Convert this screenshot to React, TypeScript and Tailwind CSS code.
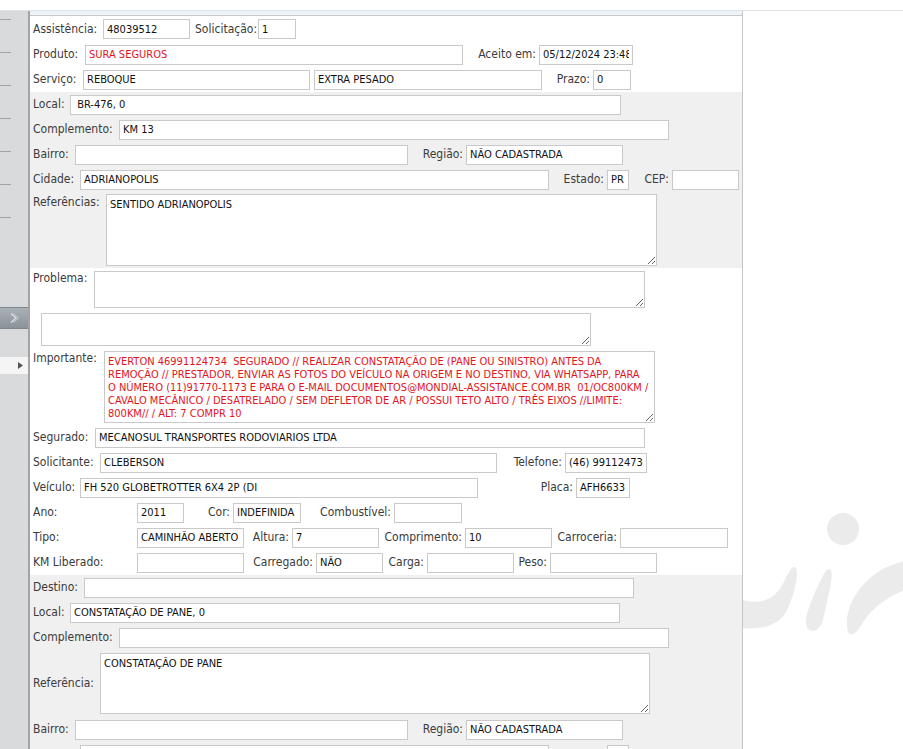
import React from 'react';
import clsx from 'clsx';

type BoxProps = { w: string; value?: string; red?: boolean };

function Box({ w, value = '', red }: BoxProps) {
  return (
    <input
      readOnly
      value={value}
      className={clsx(
        'h-[20px] shrink-0 border border-[#c9c9c9] bg-white px-[3px] text-[11px] outline-none',
        red ? 'text-[#e3141b]' : 'text-[#111]',
        w
      )}
    />
  );
}

type AreaProps = { w: string; h: string; value?: string; red?: boolean };

function Area({ w, h, value = '', red }: AreaProps) {
  return (
    <textarea
      readOnly
      wrap="off"
      value={value}
      className={clsx(
        'shrink-0 overflow-hidden border border-[#c9c9c9] bg-white px-[3px] py-[3px] text-[11px] leading-[13px] outline-none',
        red ? 'text-[#e3141b]' : 'text-[#111]',
        w,
        h
      )}
    />
  );
}

type LblProps = { w: string; right?: boolean; className?: string; children?: React.ReactNode };

function Lbl({ w, right, className, children }: LblProps) {
  return (
    <span
      className={clsx(
        'shrink-0 whitespace-nowrap text-[12px] leading-[15px] text-[#3b3b3b]',
        right && 'pr-[3px] text-right',
        w,
        className
      )}
    >
      {children}
    </span>
  );
}

function Row({ children, className }: { children: React.ReactNode; className?: string }) {
  return <div className={clsx('flex shrink-0 pl-[3px]', className ?? 'h-[25px] items-center')}>{children}</div>;
}

const importante = [
  'EVERTON 46991124734  SEGURADO // REALIZAR CONSTATAÇÃO DE (PANE OU SINISTRO) ANTES DA',
  'REMOÇÃO // PRESTADOR, ENVIAR AS FOTOS DO VEÍCULO NA ORIGEM E NO DESTINO, VIA WHATSAPP, PARA',
  'O NÚMERO (11)91770-1173 E PARA O E-MAIL DOCUMENTOS@MONDIAL-ASSISTANCE.COM.BR  01/OC800KM /',
  'CAVALO MECÂNICO / DESATRELADO / SEM DEFLETOR DE AR / POSSUI TETO ALTO / TRÊS EIXOS //LIMITE:',
  '800KM// / ALT: 7 COMPR 10',
].join('\n');

function Sidebar() {
  const ticks = [0, 1, 2, 3, 4, 5, 6];
  return (
    <div className="flex w-[28px] shrink-0 flex-col overflow-hidden bg-[#d9dadb]">
      <div className="h-[8px] shrink-0" />
      {ticks.map((t) => (
        <div key={t} className="h-[33px] shrink-0">
          <div className="h-px w-[11px] bg-[#a2a2a2]" />
        </div>
      ))}
      <div className="h-[57px] shrink-0" />
      <div className="flex h-[22px] shrink-0 items-center justify-center border-y border-[#7f878e] bg-gradient-to-b from-[#a9b1b7] to-[#8b939a]">
        <svg width="12" height="12" viewBox="0 0 12 12" fill="none">
          <path d="M3 1.5 L8 6 L3 10.5" stroke="#dfe4e8" strokeWidth="1.2" />
          <path d="M5.5 1.5 L10.5 6 L5.5 10.5" stroke="#c9d0d6" strokeWidth="1" />
        </svg>
      </div>
      <div className="h-[28px] shrink-0" />
      <div className="flex h-[17px] shrink-0 items-center justify-end bg-[#f5f5f5] pr-[5px]">
        <svg width="5" height="7" viewBox="0 0 5 7">
          <path d="M0 0 L5 3.5 L0 7 Z" fill="#555" />
        </svg>
      </div>
    </div>
  );
}

function Watermark() {
  return (
    <svg className="absolute inset-0" width="160" height="738" viewBox="743 11 160 738">
      <g fill="#ebebeb">
        <circle cx="843" cy="529" r="16" />
        <path d="M829 569 C833 569 832 578 830 588 L823 620 C820 633 806 635 806 622 C806 610 818 585 824 574 C826 570 827 569 829 569 Z" />
        <path d="M743 600 C760 605 775 600 784 582 C788 572 793 564 796 568 C799 573 795 595 786 612 C778 626 760 630 743 628 Z" />
        <path d="M848 632 C842 610 860 580 885 568 C893 564 900 562 905 561 L905 590 C890 596 873 606 862 624 C857 633 850 638 848 632 Z" />
      </g>
    </svg>
  );
}

export default function App() {
  return (
    <div className="relative h-[749px] w-[903px] overflow-hidden bg-white font-['DejaVu_Sans_Condensed','Liberation_Sans',sans-serif]">
      <div className="h-[10px]" />
      <div className="h-px bg-[#dfe4e8]" />
      <div className="flex h-[738px]">
        <Sidebar />
        <div className="w-[2px] shrink-0 bg-[#a4a4a4]" />
        <div className="flex w-[713px] shrink-0 flex-col overflow-hidden border-r border-[#c6c6c6]">
          <div className="h-[5px] shrink-0 border-b border-[#c8c8c8] bg-[#eef3f7]" />

          <Row className="h-[26px] items-center">
            <Lbl w="w-[70px]">Assistência:</Lbl>
            <Box w="w-[87px]" value="48039512" />
            <Lbl w="w-[68px]" className="pl-[5px]">Solicitação:</Lbl>
            <Box w="w-[38px]" value="1" />
          </Row>
          <Row>
            <Lbl w="w-[52px]">Produto:</Lbl>
            <Box w="w-[378px]" value="SURA SEGUROS" red />
            <Lbl w="w-[76px]" right>Aceito em:</Lbl>
            <Box w="w-[94px]" value="05/12/2024 23:48" />
          </Row>
          <Row>
            <Lbl w="w-[50px]">Serviço:</Lbl>
            <Box w="w-[227px]" value="REBOQUE" />
            <div className="w-[4px] shrink-0" />
            <Box w="w-[228px]" value="EXTRA PESADO" />
            <Lbl w="w-[51px]" right>Prazo:</Lbl>
            <Box w="w-[38px]" value="0" />
          </Row>

          <div className="shrink-0 bg-[#f0f0f0]">
            <Row>
              <Lbl w="w-[37px]">Local:</Lbl>
              <Box w="w-[551px]" value=" BR-476, 0" />
            </Row>
            <Row>
              <Lbl w="w-[86px]">Complemento:</Lbl>
              <Box w="w-[550px]" value="KM 13" />
            </Row>
            <Row>
              <Lbl w="w-[42px]">Bairro:</Lbl>
              <Box w="w-[333px]" />
              <Lbl w="w-[58px]" right>Região:</Lbl>
              <Box w="w-[157px]" value="NÃO CADASTRADA" />
            </Row>
            <Row>
              <Lbl w="w-[47px]">Cidade:</Lbl>
              <Box w="w-[469px]" value="ADRIANOPOLIS" />
              <Lbl w="w-[58px]" right>Estado:</Lbl>
              <Box w="w-[22px]" value="PR" />
              <Lbl w="w-[43px]" right>CEP:</Lbl>
              <Box w="w-[67px]" />
            </Row>
            <Row className="h-[76px] items-start pt-[2px]">
              <Lbl w="w-[73px]" className="pt-[1px]">Referências:</Lbl>
              <Area w="w-[551px]" h="h-[72px]" value="SENTIDO ADRIANOPOLIS" />
            </Row>
          </div>

          <Row className="h-[42px] items-start pt-[3px]">
            <Lbl w="w-[61px]">Problema:</Lbl>
            <Area w="w-[551px]" h="h-[37px]" />
          </Row>
          <Row className="h-[38px] items-start pt-[3px]">
            <div className="w-[8px] shrink-0" />
            <Area w="w-[550px]" h="h-[33px]" />
          </Row>
          <Row className="h-[77px] items-start pt-[3px]">
            <Lbl w="w-[71px]">Importante:</Lbl>
            <Area w="w-[551px]" h="h-[72px]" value={importante} red />
          </Row>

          <Row>
            <Lbl w="w-[62px]">Segurado:</Lbl>
            <Box w="w-[550px]" value="MECANOSUL TRANSPORTES RODOVIARIOS LTDA" />
          </Row>
          <Row>
            <Lbl w="w-[67px]">Solicitante:</Lbl>
            <Box w="w-[397px]" value="CLEBERSON" />
            <Lbl w="w-[68px]" right>Telefone:</Lbl>
            <Box w="w-[82px]" value="(46) 991124734" />
          </Row>
          <Row>
            <Lbl w="w-[47px]">Veículo:</Lbl>
            <Box w="w-[398px]" value="FH 520 GLOBETROTTER 6X4 2P (DI" />
            <Lbl w="w-[98px]" right>Placa:</Lbl>
            <Box w="w-[54px]" value="AFH6633" />
          </Row>
          <Row>
            <Lbl w="w-[104px]">Ano:</Lbl>
            <Box w="w-[47px]" value="2011" />
            <Lbl w="w-[49px]" right className="pr-[2px]">Cor:</Lbl>
            <Box w="w-[68px]" value="INDEFINIDA" />
            <Lbl w="w-[93px]" right className="pr-[1px]">Combustível:</Lbl>
            <Box w="w-[68px]" />
          </Row>
          <Row>
            <Lbl w="w-[104px]">Tipo:</Lbl>
            <Box w="w-[107px]" value="CAMINHÃO ABERTO" />
            <Lbl w="w-[48px]" right>Altura:</Lbl>
            <Box w="w-[87px]" value="7" />
            <Lbl w="w-[86px]" right className="pr-[1px]">Comprimento:</Lbl>
            <Box w="w-[87px]" value="10" />
            <Lbl w="w-[68px]" right className="pr-[1px]">Carroceria:</Lbl>
            <Box w="w-[108px]" />
          </Row>
          <Row>
            <Lbl w="w-[104px]">KM Liberado:</Lbl>
            <Box w="w-[107px]" />
            <Lbl w="w-[72px]" right className="pr-[1px]">Carregado:</Lbl>
            <Box w="w-[67px]" value="NÃO" />
            <Lbl w="w-[44px]" right className="pr-[1px]">Carga:</Lbl>
            <Box w="w-[87px]" />
            <Lbl w="w-[36px]" right className="pr-[1px]">Peso:</Lbl>
            <Box w="w-[107px]" />
          </Row>

          <div className="shrink-0 grow bg-[#f0f0f0]">
            <Row>
              <Lbl w="w-[51px]">Destino:</Lbl>
              <Box w="w-[550px]" />
            </Row>
            <Row>
              <Lbl w="w-[37px]">Local:</Lbl>
              <Box w="w-[550px]" value="CONSTATAÇÃO DE PANE, 0" />
            </Row>
            <Row>
              <Lbl w="w-[86px]">Complemento:</Lbl>
              <Box w="w-[550px]" />
            </Row>
            <Row className="h-[67px] items-center">
              <Lbl w="w-[67px]">Referência:</Lbl>
              <Area w="w-[550px]" h="h-[61px]" value="CONSTATAÇÃO DE PANE" />
            </Row>
            <Row>
              <Lbl w="w-[42px]">Bairro:</Lbl>
              <Box w="w-[333px]" />
              <Lbl w="w-[58px]" right>Região:</Lbl>
              <Box w="w-[157px]" value="NÃO CADASTRADA" />
            </Row>
            {/* next row only shows the top edge of its boxes */}
            <Row>
              <Lbl w="w-[47px]" />
              <Box w="w-[469px]" />
              <Lbl w="w-[58px]" />
              <Box w="w-[22px]" />
            </Row>
          </div>
        </div>
        <div className="relative flex-1">
          <Watermark />
        </div>
      </div>
    </div>
  );
}
